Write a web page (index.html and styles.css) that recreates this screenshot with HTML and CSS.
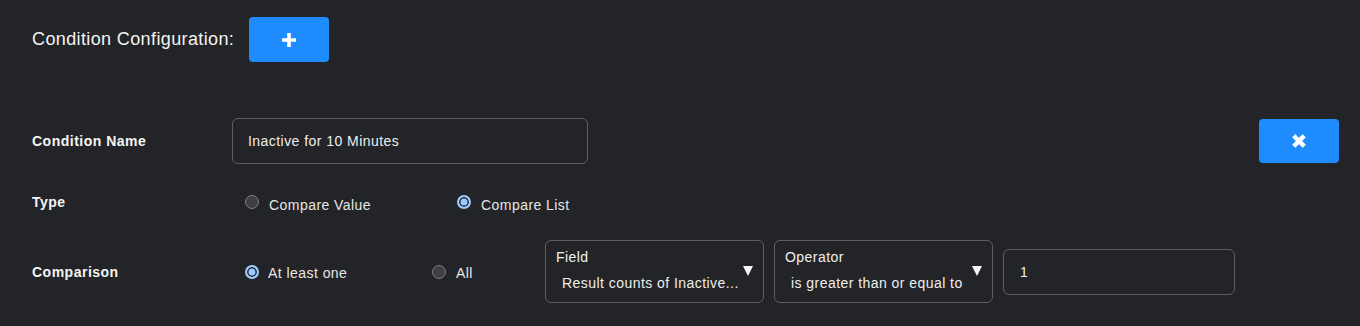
FILE: index.html
```html
<!DOCTYPE html>
<html>
<head>
<meta charset="utf-8">
<link rel="stylesheet" href="styles.css">
</head>
<body>
<div class="page">
  <div class="header">
    <span class="title">Condition Configuration:</span>
    <button class="btn btn-add" aria-label="Add">
      <svg width="14" height="14" viewBox="0 0 14 14"><path d="M5.2 0h3.6v5.2H14v3.6H8.8V14H5.2V8.8H0V5.2h5.2z" fill="#fff"/></svg>
    </button>
  </div>

  <div class="row row-name">
    <div class="label">Condition Name</div>
    <div class="text-input name-input">Inactive for 10 Minutes</div>
    <div class="spacer"></div>
    <button class="btn btn-remove" aria-label="Remove">
      <svg width="14" height="14" viewBox="0 0 14 14"><path d="M0.5 3.3L3.3 0.5 7 4.2 10.7 0.5 13.5 3.3 9.8 7 13.5 10.7 10.7 13.5 7 9.8 3.3 13.5 0.5 10.7 4.2 7z" fill="#fff" stroke="#fff" stroke-width="0.6" stroke-linejoin="round"/></svg>
    </button>
  </div>

  <div class="row row-type">
    <div class="label">Type</div>
    <label class="option opt-value"><span class="radio"></span><span class="opt-text">Compare Value</span></label>
    <label class="option opt-list"><span class="radio checked"></span><span class="opt-text">Compare List</span></label>
  </div>

  <div class="row row-comp">
    <div class="label">Comparison</div>
    <label class="option opt-least"><span class="radio checked"></span><span class="opt-text small-shift">At least one</span></label>
    <label class="option opt-all"><span class="radio"></span><span class="opt-text small-shift">All</span></label>
    <div class="select">
      <div class="select-label">Field</div>
      <div class="select-value">Result counts of Inactive...</div>
      <span class="arrow"></span>
    </div>
    <div class="select">
      <div class="select-label">Operator</div>
      <div class="select-value">is greater than or equal to</div>
      <span class="arrow"></span>
    </div>
    <div class="text-input value-input">1</div>
  </div>
</div>
</body>
</html>
```

FILE: styles.css
```css
html, body {
  margin: 0;
  padding: 0;
  background: #232427;
  width: 1360px;
  height: 326px;
  overflow: hidden;
  font-family: "Liberation Sans", Arial, sans-serif;
  color: #f1f1f1;
}
.page {
  padding: 17px 21px 0 32px;
}
.header {
  display: flex;
  align-items: center;
  height: 45px;
  gap: 15px;
}
.title {
  font-size: 18px;
  letter-spacing: 0.38px;
  color: #f3f3f3;
}
.btn {
  width: 80px;
  border: none;
  border-radius: 4px;
  background: #1e8cff;
  display: flex;
  align-items: center;
  justify-content: center;
  padding: 0;
}
.btn-add { height: 45px; }
.btn-remove { height: 44px; }
.row {
  display: flex;
  align-items: center;
}
.label {
  width: 200px;
  flex: none;
  font-size: 14px;
  letter-spacing: 0.5px;
  font-weight: bold;
  color: #f5f5f5;
}
.row-name {
  margin-top: 56px;
  height: 46px;
}
.spacer { flex: 1; }
.text-input {
  box-sizing: border-box;
  height: 46px;
  border: 1px solid #5e5f62;
  border-radius: 6px;
  display: flex;
  align-items: center;
  font-size: 14px;
  letter-spacing: 0.45px;
  color: #eeeeee;
}
.name-input {
  width: 356px;
  padding-left: 15px;
}
.row-type {
  margin-top: 23px;
  height: 30px;
}
.option {
  display: flex;
  align-items: center;
  font-size: 14px;
  letter-spacing: 0.45px;
  color: #e6e6e6;
  padding-left: 13px;
  box-sizing: border-box;
}
.opt-text {
  padding-top: 5px;
}
.opt-text.small-shift {
  padding-top: 2px;
}
.opt-value { width: 212px; }
.opt-least { width: 187px; }
.opt-all { width: 126px; }
.radio {
  box-sizing: border-box;
  width: 14px;
  height: 14px;
  border-radius: 50%;
  border: 1.5px solid #7d7e80;
  background: #3f4043;
  margin-right: 10px;
  flex: none;
}
.radio.checked {
  border: 2px solid #9ccaff;
  background: #9ccaff;
  box-shadow: inset 0 0 0 1.5px #232427;
}
.opt-least .radio { margin-right: 9px; }
.row-comp {
  margin-top: 23px;
  height: 63px;
}
.select {
  position: relative;
  box-sizing: border-box;
  width: 219px;
  height: 63px;
  border: 1px solid #5e5f62;
  border-radius: 6px;
  margin-right: 10px;
  padding: 8px 0 0 10px;
}
.select-label {
  font-size: 14px;
  letter-spacing: 0.45px;
  color: #f0f0f0;
  line-height: 17px;
}
.select-value {
  font-size: 14px;
  letter-spacing: 0.45px;
  color: #eeeeee;
  line-height: 17px;
  margin-top: 9px;
  padding-left: 6px;
  white-space: nowrap;
}
.arrow {
  position: absolute;
  right: 10px;
  top: 25px;
  width: 0;
  height: 0;
  border-left: 5px solid transparent;
  border-right: 5px solid transparent;
  border-top: 10px solid #f5f5f5;
}
.value-input {
  width: 232px;
  padding-left: 16px;
}
```
